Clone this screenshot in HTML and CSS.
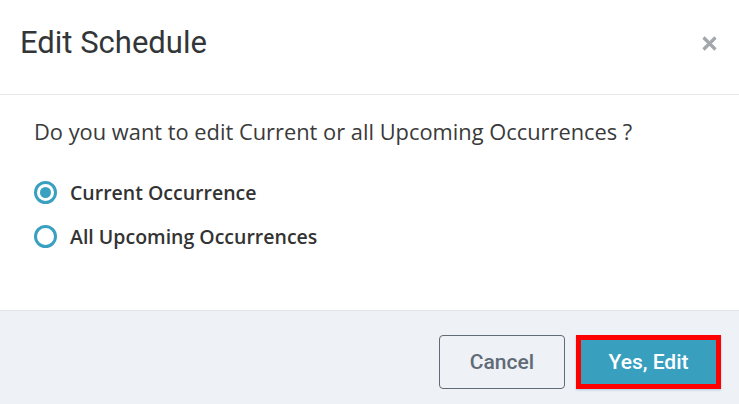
FILE: index.html
```html
<!DOCTYPE html>
<html lang="en">
  <head>
    <meta charset="UTF-8" />
    <title>Edit Schedule</title>
    <link rel="stylesheet" href="styles.css">
  </head>
  <body>
    <div class="modal">
      <div class="modal-header">
        <h1 class="modal-title">Edit Schedule</h1>
        <button class="close" aria-label="Close">
          <svg width="15" height="15" viewBox="0 0 15 15">
            <path d="M1.5 1.5 L13.5 13.5 M13.5 1.5 L1.5 13.5" stroke="#a3a7ab" stroke-width="3.2" />
          </svg>
        </button>
      </div>

      <div class="modal-body">
        <p class="question">Do you want to edit Current or all Upcoming Occurrences ?</p>
        <label class="radio">
          <input type="radio" name="occurrence" checked />
          <span class="mark"></span>
          Current Occurrence
        </label>
        <label class="radio">
          <input type="radio" name="occurrence" />
          <span class="mark"></span>
          All Upcoming Occurrences
        </label>
      </div>

      <div class="modal-footer">
        <button class="btn btn-default">Cancel</button>
        <button class="btn btn-primary">Yes, Edit</button>
      </div>
    </div>
  </body>
</html>
```

FILE: styles.css
```css
body {
  margin: 0;
  background: #fff;
  font-family: "Open Sans", sans-serif;
  color: #333;
}
.modal {
  width: 739px;
  height: 404px;
  display: flex;
  flex-direction: column;
}
.modal-header {
  height: 95px;
  box-sizing: border-box;
  display: flex;
  align-items: flex-start;
  justify-content: space-between;
  padding: 24px 22px 0 20px;
  border-bottom: 1px solid #e6e6e6;
}
.modal-title {
  margin: 0;
  font-family: Roboto, sans-serif;
  font-weight: 400;
  font-size: 31px;
  line-height: normal;
  color: #333638;
}
.close {
  border: 0;
  background: none;
  padding: 0;
  display: flex;
  margin-top: 12px;
}
.modal-body {
  flex: 1;
  padding: 0 34px;
}
.question {
  margin: 23px 0 24px;
  font-size: 21.85px;
  line-height: 28px;
  color: #3a3a3a;
}
.radio {
  display: flex;
  align-items: center;
  height: 44px;
  font-size: 19.5px;
  font-weight: 600;
  color: #333;
}
.radio input {
  display: none;
}
.mark {
  width: 23px;
  height: 23px;
  box-sizing: border-box;
  border: 3px solid #3aa0c0;
  border-radius: 50%;
  margin-right: 13px;
  display: flex;
  align-items: center;
  justify-content: center;
}
.radio input:checked + .mark::after {
  content: "";
  width: 11px;
  height: 11px;
  border-radius: 50%;
  background: #3aa0c0;
}
.modal-footer {
  height: 94px;
  box-sizing: border-box;
  background: #eef1f5;
  border-top: 1px solid #e2e5e9;
  display: flex;
  justify-content: flex-end;
  align-items: flex-start;
  gap: 11px;
  padding: 24px 18px 0;
}
.btn {
  height: 54px;
  font-family: Roboto, sans-serif;
  font-weight: 500;
  font-size: 21px;
  border-radius: 4px;
  cursor: pointer;
}
.btn-default {
  width: 126px;
  background: transparent;
  border: 1px solid #5f6b77;
  color: #5f6b77;
}
.btn-primary {
  width: 145px;
  background: #389fbf;
  border: 5px solid #ff0000;
  border-radius: 0;
  color: #fff;
  box-shadow: 0 1px 2px rgba(56, 159, 191, 0.4);
}
```
